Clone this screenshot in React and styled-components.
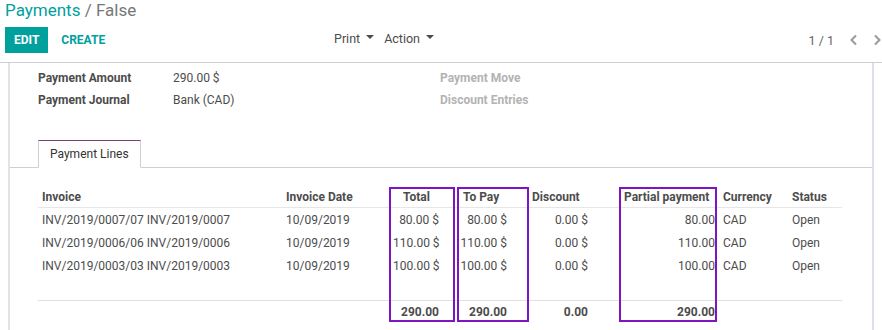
import styled, { createGlobalStyle } from 'styled-components';

const GlobalStyle = createGlobalStyle`
	body {
		margin: 0;
		background: #fff;
		font-family: Roboto, 'Liberation Sans', sans-serif;
		color: #4c4c4c;
	}
`;

const ControlPanel = styled.div`
	height: 62px;
	padding: 0 0 0 5px;
	border-bottom: 1px solid #cfcfcf;
`;

const Breadcrumb = styled.div`
	font-size: 17px;
	line-height: 20px;
	color: #777;

	.link {
		color: #00a09d;
	}
`;

const ButtonsRow = styled.div`
	display: flex;
	align-items: center;
	height: 26px;
	margin-top: 7px;
`;

const LeftButtons = styled.div`
	display: flex;
	align-items: center;
	width: 329px;
`;

const Button = styled.button`
	height: 26px;
	border: none;
	border-radius: 0;
	padding: 0 ${(p) => (p.$primary ? '9px' : '13px')};
	background: ${(p) => (p.$primary ? '#00a09d' : 'transparent')};
	color: ${(p) => (p.$primary ? '#fff' : '#00a09d')};
	font-family: Roboto, 'Liberation Sans', sans-serif;
	font-size: 12px;
	font-weight: 700;
	text-transform: uppercase;
`;

const Dropdowns = styled.div`
	display: flex;
	gap: 10px;
	margin-top: -4px;
`;

const DropToggle = styled.div`
	display: flex;
	align-items: center;
	gap: 6px;
	font-size: 12.5px;
	color: #4c4c4c;

	&::after {
		content: '';
		border-top: 4px solid #4c4c4c;
		border-left: 4px solid transparent;
		border-right: 4px solid transparent;
		margin-top: -2px;
	}
`;

const Pager = styled.div`
	margin-left: auto;
	display: flex;
	align-items: center;
	font-size: 12.5px;
	color: #666;

	svg {
		margin-left: 15px;
	}
`;

const Sheet = styled.div`
	margin: 0 8px;
	border-left: 2px solid #e3e3e3;
	border-right: 2px solid #dde1e7;
	padding-bottom: 8px;
`;

const Fields = styled.div`
	display: grid;
	grid-template-columns: 135px 267px 1fr;
	padding: 4px 30px 0 28px;
	font-size: 12px;
	line-height: 22px;
`;

const Label = styled.div`
	font-weight: 700;
	color: ${(p) => (p.$empty ? '#b3b3b3' : '#4c4c4c')};
`;

const Value = styled.div`
	color: #4c4c4c;
`;

const TabNav = styled.div`
	display: flex;
	margin-top: 29px;
	padding-left: 28px;
	border-bottom: 1px solid #cfcfcf;
`;

const Tab = styled.div`
	height: 26px;
	padding: 0 11px;
	margin-bottom: -1px;
	display: flex;
	align-items: center;
	font-size: 12px;
	color: #333;
	background: #fff;
	border: 1px solid #cfcfcf;
	border-top: 1px solid #7c3f6f;
	border-bottom: 1px solid #fff;
`;

const TableWrap = styled.div`
	position: relative;
	margin: 19px 30px 0 28px;
`;

const Table = styled.table`
	width: 804px;
	table-layout: fixed;
	border-collapse: collapse;
	font-size: 12px;
	color: #4c4c4c;
`;

const Th = styled.th`
	height: 20px;
	padding: 0 0 0 ${(p) => p.$pad}px;
	text-align: left;
	font-weight: 700;
	border-bottom: 1px solid #e6e6e6;
`;

const Td = styled.td`
	height: 23px;
	padding: 0 4px;
	text-align: ${(p) => (p.$num ? 'right' : 'left')};
	white-space: nowrap;
`;

const FootTd = styled.td`
	height: 22px;
	padding: 0 4px;
	text-align: right;
	font-weight: 700;
	border-top: 1px solid #dee2e6;
`;

const Highlight = styled.div`
	position: absolute;
	top: 0;
	height: 135px;
	box-sizing: border-box;
	border: 2px solid #7d16c2;
	pointer-events: none;
`;

const columns = [
	{ key: 'invoice', title: 'Invoice', width: 244, pad: 4 },
	{ key: 'date', title: 'Invoice Date', width: 107, pad: 4 },
	{ key: 'total', title: 'Total', width: 54, pad: 14, num: true },
	{ key: 'topay', title: 'To Pay', width: 68, pad: 20, num: true },
	{ key: 'discount', title: 'Discount', width: 81, pad: 21, num: true },
	{ key: 'partial', title: 'Partial payment', width: 127, pad: 32, num: true },
	{ key: 'currency', title: 'Currency', width: 69, pad: 4 },
	{ key: 'status', title: 'Status', width: 54, pad: 4 },
];

const lines = [
	{
		invoice: 'INV/2019/0007/07 INV/2019/0007',
		date: '10/09/2019',
		total: '80.00 $',
		topay: '80.00 $',
		discount: '0.00 $',
		partial: '80.00',
		currency: 'CAD',
		status: 'Open',
	},
	{
		invoice: 'INV/2019/0006/06 INV/2019/0006',
		date: '10/09/2019',
		total: '110.00 $',
		topay: '110.00 $',
		discount: '0.00 $',
		partial: '110.00',
		currency: 'CAD',
		status: 'Open',
	},
	{
		invoice: 'INV/2019/0003/03 INV/2019/0003',
		date: '10/09/2019',
		total: '100.00 $',
		topay: '100.00 $',
		discount: '0.00 $',
		partial: '100.00',
		currency: 'CAD',
		status: 'Open',
	},
];

const totals = { total: '290.00', topay: '290.00', discount: '0.00', partial: '290.00' };

const highlights = [
	{ left: 351, width: 66 },
	{ left: 419, width: 72 },
	{ left: 581, width: 98 },
];

const Chevron = ({ dir }) => (
	<svg width='9' height='12' viewBox='0 0 9 12'>
		<path
			d={dir === 'left' ? 'M7 1.5 L2.5 6 L7 10.5' : 'M2 1.5 L6.5 6 L2 10.5'}
			fill='none'
			stroke='#999'
			strokeWidth='2'
		/>
	</svg>
);

const App = () => {
	return (
		<>
			<GlobalStyle />
			<ControlPanel>
				<Breadcrumb>
					<span className='link'>Payments</span> / False
				</Breadcrumb>
				<ButtonsRow>
					<LeftButtons>
						<Button $primary>Edit</Button>
						<Button>Create</Button>
					</LeftButtons>
					<Dropdowns>
						<DropToggle>Print</DropToggle>
						<DropToggle>Action</DropToggle>
					</Dropdowns>
					<Pager>
						<span>1 / 1</span>
						<Chevron dir='left' />
						<Chevron dir='right' />
					</Pager>
				</ButtonsRow>
			</ControlPanel>
			<Sheet>
				<Fields>
					<Label>Payment Amount</Label>
					<Value>290.00 $</Value>
					<Label $empty>Payment Move</Label>
					<Label>Payment Journal</Label>
					<Value>Bank (CAD)</Value>
					<Label $empty>Discount Entries</Label>
				</Fields>
				<TabNav>
					<Tab>Payment Lines</Tab>
				</TabNav>
				<TableWrap>
					<Table>
						<colgroup>
							{columns.map((c) => (
								<col key={c.key} style={{ width: c.width }} />
							))}
						</colgroup>
						<thead>
							<tr>
								{columns.map((c) => (
									<Th key={c.key} $pad={c.pad}>
										{c.title}
									</Th>
								))}
							</tr>
						</thead>
						<tbody>
							{lines.map((line) => (
								<tr key={line.invoice}>
									{columns.map((c) => (
										<Td key={c.key} $num={c.num}>
											{line[c.key]}
										</Td>
									))}
								</tr>
							))}
							<tr>
								<Td colSpan={columns.length} />
							</tr>
						</tbody>
						<tfoot>
							<tr>
								{columns.map((c) => (
									<FootTd key={c.key}>{totals[c.key] || ''}</FootTd>
								))}
							</tr>
						</tfoot>
					</Table>
					{highlights.map((h) => (
						<Highlight key={h.left} style={{ left: h.left, width: h.width }} />
					))}
				</TableWrap>
			</Sheet>
		</>
	);
};

export default App;
